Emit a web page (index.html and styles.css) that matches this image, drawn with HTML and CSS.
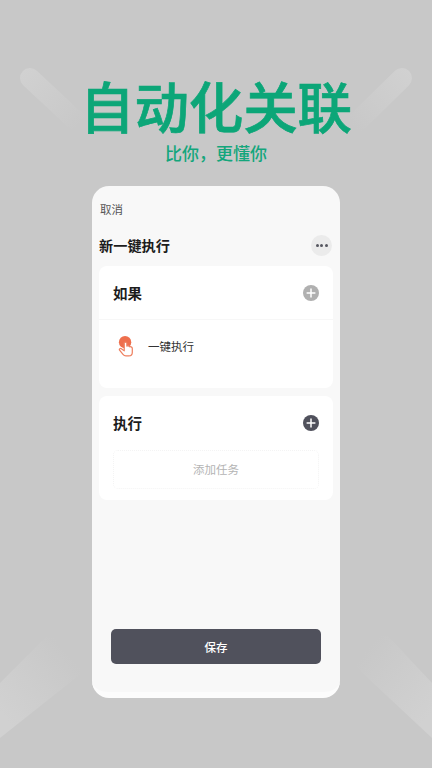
FILE: index.html
```html
<!DOCTYPE html>
<html lang="zh">
<head>
<meta charset="utf-8">
<title>自动化关联</title>
<link rel="stylesheet" href="styles.css">
</head>
<body>
<svg class="decor" viewBox="0 0 432 768" aria-hidden="true">
  <defs>
    <linearGradient id="tl" x1="22" y1="72" x2="78" y2="126" gradientUnits="userSpaceOnUse"><stop offset="0" stop-color="#d1d1d1"/><stop offset="1" stop-color="#c8c8c8"/></linearGradient>
    <linearGradient id="tr" x1="410" y1="72" x2="354" y2="126" gradientUnits="userSpaceOnUse"><stop offset="0" stop-color="#d1d1d1"/><stop offset="1" stop-color="#c8c8c8"/></linearGradient>
    <linearGradient id="bl" x1="0" y1="712" x2="68" y2="654" gradientUnits="userSpaceOnUse"><stop offset="0" stop-color="#d1d1d1"/><stop offset="1" stop-color="#c8c8c8"/></linearGradient>
    <linearGradient id="br" x1="432" y1="712" x2="364" y2="654" gradientUnits="userSpaceOnUse"><stop offset="0" stop-color="#d1d1d1"/><stop offset="1" stop-color="#c8c8c8"/></linearGradient>
  </defs>
  <path d="M30 78 L90 134" stroke="url(#tl)" stroke-width="20" stroke-linecap="round" fill="none"/>
  <path d="M402 78 L345 134" stroke="url(#tr)" stroke-width="20" stroke-linecap="round" fill="none"/>
  <path d="M0 683 L46 637 L92 637 L92 665 L0 738 Z" fill="url(#bl)"/>
  <path d="M432 683 L388 636 L340 636 L340 652 L432 738 Z" fill="url(#br)"/>
</svg>
<main class="page">
  <header class="hero">
    <h1 class="hero-title">自动化关联</h1>
    <p class="hero-sub">比你，更懂你</p>
  </header>
  <section class="phone">
    <div class="cancel">取消</div>
    <div class="title-row">
      <h2 class="page-title">新一键执行</h2>
      <span class="more"><i></i><i></i><i></i></span>
    </div>
    <div class="panel panel-if">
      <div class="panel-head">
        <h3 class="panel-title">如果</h3>
        <svg class="plus" viewBox="0 0 16 16"><circle cx="8" cy="8" r="8" fill="#b0b0b0"/><path d="M8 3.6v8.8M3.6 8h8.8" stroke="#fff" stroke-width="1.5"/></svg>
      </div>
      <div class="trigger">
        <svg class="hand" viewBox="0 0 20 22">
          <circle cx="8.500" cy="6.500" r="6.500" fill="#ee6f4d"/>
          <path d="M7.600 7.600v8L4.600 13.300c-1-.8-2.800.3-1.900 1.500l3.600 4.600c.8 1 1.800 1.500 3.100 1.500h3.100c2.100 0 3.600-1.500 3.600-3.600v-4.300c0-1.700-2.200-2-2.900-1.700-.3-1.100-2.100-1.300-2.800-.7V7.600c0-1.600-3-1.600-3 0z" fill="#fff" stroke="#ee8060" stroke-width="1.300" stroke-linejoin="round"/>
        </svg>
        <span class="trigger-label">一键执行</span>
      </div>
    </div>
    <div class="panel panel-do">
      <div class="panel-head">
        <h3 class="panel-title">执行</h3>
        <svg class="plus" viewBox="0 0 16 16"><circle cx="8" cy="8" r="8" fill="#50515c"/><path d="M8 3.600v8.800M3.600 8h8.800" stroke="#fff" stroke-width="1.500"/></svg>
      </div>
      <div class="add-task">添加任务</div>
    </div>
    <button class="save" type="button">保存</button>
  </section>
</main>
</body>
</html>
```
FILE: styles.css
```css
* { box-sizing: border-box; }
html, body { margin: 0; height: 100%; }
body {
  width: 432px;
  height: 768px;
  overflow: hidden;
  position: relative;
  background: #c8c8c8;
  font-family: "Noto Sans CJK SC", "Noto Sans", sans-serif;
}
.decor { position: absolute; left: 0; top: 0; width: 432px; height: 768px; }
.page { position: relative; display: flex; flex-direction: column; align-items: center; height: 768px; padding-top: 72px; }
.hero { display: flex; flex-direction: column; align-items: center; height: 114px; }
.hero-title {
  margin: 0;
  font-size: 54.500px;
  line-height: 66px;
  font-weight: 500;
  -webkit-text-stroke: 0.700px #0ca678;
  letter-spacing: -0.100px;
  color: #0ca678;
}
.hero-sub {
  margin: 5px 0 0;
  font-size: 17px;
  line-height: 20px;
  font-weight: 500;
  color: #14a67c;
}
.phone {
  width: 248px;
  height: 512px;
  background: #f8f8f8;
  border-radius: 17px;
  border-bottom: 6px solid #fcfcfc;
  padding: 0 7px;
  display: flex;
  flex-direction: column;
}
.cancel { margin-top: 15px; padding-left: 1px; font-size: 11.500px; line-height: 16px; color: #555; }
.title-row { margin-top: 15px; height: 26px; display: flex; align-items: center; justify-content: space-between; padding-right: 1px; }
.page-title { margin: 0; font-size: 14.200px; line-height: 20px; font-weight: 700; color: #1c1c1c; }
.more { width: 21px; height: 21px; border-radius: 50%; background: #ebebeb; display: flex; align-items: center; justify-content: center; gap: 1.500px; }
.more i { width: 3px; height: 3px; border-radius: 50%; background: #55565f; }
.panel { background: #fff; border-radius: 8px; width: 234px; }
.panel-if { margin-top: 8px; height: 122px; }
.panel-do { margin-top: 8px; height: 104px; }
.panel-head { height: 54px; padding: 0 14px; display: flex; align-items: center; justify-content: space-between; }
.panel-if .panel-head { border-bottom: 1px solid #f7f7f7; }
.panel-title { margin: 0; font-size: 14.500px; line-height: 20px; font-weight: 700; color: #1c1c1c; }
.plus { width: 16px; height: 16px; display: block; }
.trigger { display: flex; align-items: center; padding: 16px 0 0 18px; gap: 12px; }
.hand { width: 19px; height: 21px; display: block; }
.trigger-label { font-size: 11.500px; line-height: 21px; color: #333; }
.add-task {
  margin: 0 14px;
  height: 39px;
  padding-bottom: 2px;
  border: 1px dotted #f4f4f4;
  border-radius: 5px;
  display: flex;
  align-items: center;
  justify-content: center;
  font-size: 11.500px;
  color: #b4b4b4;
}
.save {
  margin: 129px 0 0 12px;
  width: 210px;
  height: 35px;
  border: 0;
  border-radius: 5px;
  background: #50515c;
  color: #fff;
  font-family: inherit;
  font-size: 11.500px;
  font-weight: 500;
}
```
